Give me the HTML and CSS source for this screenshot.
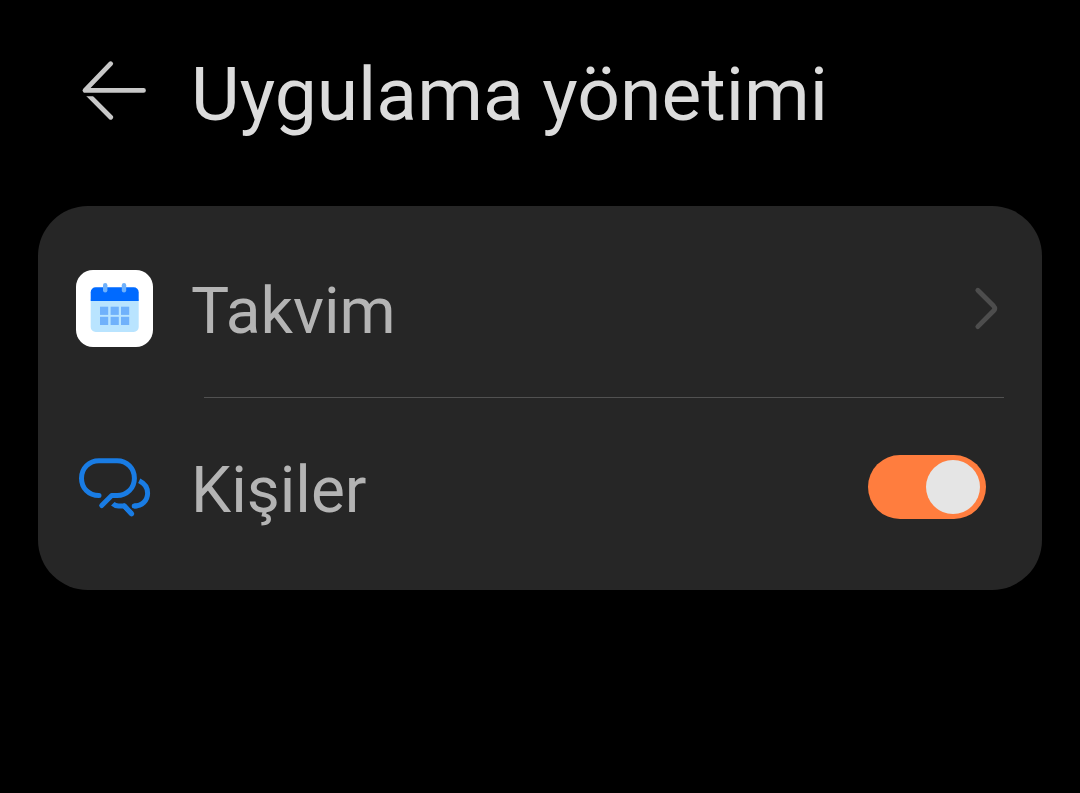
FILE: index.html
```html
<!DOCTYPE html>
<html lang="tr">
<head>
  <meta charset="UTF-8" />
  <title>Uygulama yönetimi</title>
  <meta name="viewport" content="width=device-width, initial-scale=1.0" />
  <link rel="stylesheet" href="styles.css">
</head>
<body>

  <header class="top-bar">
    <button class="back-button" type="button" aria-label="Geri">
      <svg class="back-icon" viewBox="0 0 78 88" fill="none" stroke="#c8c8c8" stroke-width="4.8" stroke-linecap="round" stroke-linejoin="round">
        <clipPath id="lower-stroke"><rect x="0" y="46.3" width="78" height="40" /></clipPath>
        <path d="M34.7 13.7 L9 40.4 H67.5" />
        <path d="M8 40.4 L34.7 67.2" clip-path="url(#lower-stroke)" />
      </svg>
    </button>
    <h1 class="title">Uygulama yönetimi</h1>
  </header>

  <main class="card">
    <a class="row" href="#takvim">
      <span class="icon-slot">
        <svg class="calendar-icon" viewBox="0 0 77 77">
          <rect width="77" height="77" rx="17" fill="#ffffff" />
          <path d="M14.7 29 H62.7 V57 a5 5 0 0 1 -5 5 H19.7 a5 5 0 0 1 -5 -5 Z" fill="#b9e4ff" />
          <path d="M14.7 31 V22.3 a5 5 0 0 1 5 -5 H57.7 a5 5 0 0 1 5 5 V31 Z" fill="#006aff" />
          <g fill="#6fb1fb">
            <rect x="27" y="13" width="4.4" height="9.4" rx="2.2" />
            <rect x="45.8" y="13" width="4.4" height="9.4" rx="2.2" />
            <rect x="24" y="36.7" width="8.2" height="8.2" />
            <rect x="34.6" y="36.7" width="8.2" height="8.2" />
            <rect x="45" y="36.7" width="8.2" height="8.2" />
            <rect x="24" y="46.8" width="8.2" height="8.2" />
            <rect x="34.6" y="46.8" width="8.2" height="8.2" />
            <rect x="45" y="46.8" width="8.2" height="8.2" />
          </g>
        </svg>
      </span>
      <span class="label">Takvim</span>
      <svg class="chevron" viewBox="0 0 32 49" fill="none" stroke="#4d4d4d" stroke-width="4.8" stroke-linecap="round">
        <path d="M5.8 6.2 L21.6 22 Q23.8 24.4 21.6 26.8 L5.8 42.6" />
      </svg>
    </a>

    <hr class="divider" />

    <label class="row" for="contacts">
      <span class="icon-slot">
        <svg class="chat-icon" viewBox="0 0 78 78" fill="none" stroke="#197ce4" stroke-width="5" stroke-linecap="round" stroke-linejoin="round">
          <path d="M23 47.6 C12.5 47.6 5.5 40 5.5 30.2 C5.5 20.4 13 12.8 23 12.8 H41 C51 12.8 58.4 20.4 58.4 30.2 C58.4 40 51 47.6 41 47.6 H35.7 L25.7 57.6" />
          <path d="M63.2 32.8 C68.8 35.5 71.6 40.4 71.6 45.2 C71.6 52.6 66 58 58.2 58" stroke-linecap="butt" />
          <path d="M60 58 H58.2" />
          <path d="M36.8 55.8 Q39 58 42.5 58 H48.3 L55.6 65.8" stroke-linecap="butt" />
          <path d="M48.3 58 L55.6 65.8" />
        </svg>
      </span>
      <span class="label">Kişiler</span>
      <input class="toggle" type="checkbox" role="switch" id="contacts" checked />
    </label>
  </main>

</body>
</html>
```

FILE: styles.css
```css
* {
  box-sizing: border-box;
}

body {
  margin: 0;
  padding: 50px 38px;
  background-color: #000;
  font-family: Roboto, sans-serif;
}

.top-bar {
  display: flex;
  align-items: center;
  padding: 0 38px;
  margin-bottom: 68px;
}

.back-button {
  flex: none;
  width: 115px;
  padding: 0;
  border: none;
  background: none;
  text-align: left;
  cursor: pointer;
}

.back-icon {
  display: block;
  width: 78px;
  height: 88px;
}

.title {
  margin: 0;
  color: #dcdcdc;
  font-size: 75px;
  font-weight: 400;
  line-height: 88px;
}

.card {
  padding: 13px 38px 14px;
  border-radius: 50px;
  background-color: #262626;
}

.row {
  display: flex;
  align-items: center;
  min-height: 178px;
  color: #b4b4b4;
  font-size: 64px;
  line-height: 76px;
  text-decoration: none;
  cursor: pointer;
}

.icon-slot {
  flex: none;
  width: 115px;
}

.icon-slot svg {
  display: block;
}

.calendar-icon {
  width: 77px;
  height: 77px;
}

.chat-icon {
  width: 78px;
  height: 78px;
}

.label {
  flex: 1;
  padding-top: 8px;
}

.chevron {
  flex: none;
  width: 32px;
  height: 49px;
}

.divider {
  height: 1px;
  margin: 0 0 0 128px;
  border: none;
  background-color: #515151;
}

/* switch */
.toggle {
  appearance: none;
  flex: none;
  display: flex;
  align-items: center;
  width: 118px;
  height: 64px;
  margin: 0 18px 0 0;
  padding: 0 6px;
  border-radius: 32px;
  background-color: #5a5a5a;
  cursor: pointer;
}

.toggle::before {
  content: "";
  width: 54px;
  height: 54px;
  border-radius: 50%;
  background-color: #e5e5e5;
}

.toggle:checked {
  justify-content: flex-end;
  background-color: #ff7d3e;
}
```
